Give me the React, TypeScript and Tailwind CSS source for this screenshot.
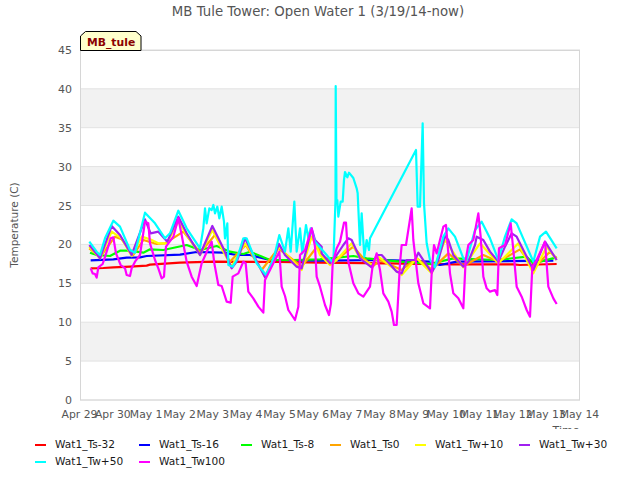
import React from 'react';

type Pt = [number, number];

// points read off the chart, given in two crops of it that are scaled 3x
const a = (pts: Pt[]): Pt[] => pts.map(([x, y]) => [80 + x / 3, 180 + y / 3]);
const b = (pts: Pt[]): Pt[] => pts.map(([x, y]) => [320 + x / 3, 180 + y / 3]);

const series: { name: string; color: string; points: Pt[] }[] = [
  {
    name: 'Wat1_Ts-32',
    color: '#ff0000',
    points: [
      ...a([[32, 265], [70, 264], [100, 262], [150, 260], [200, 257], [210, 254], [300, 248], [400, 245], [600, 246], [720, 248]]),
      ...b([[0, 248], [200, 250], [400, 253], [580, 253], [600, 255], [710, 252]]),
    ],
  },
  {
    name: 'Wat1_Ts-16',
    color: '#0000ff',
    points: [
      ...a([[32, 241], [100, 238], [140, 233], [180, 232], [200, 228], [300, 224], [350, 216], [430, 218], [470, 225], [510, 225], [570, 240], [720, 242]]),
      ...b([[0, 242], [200, 240], [330, 245], [360, 255], [410, 245], [700, 242]]),
    ],
  },
  {
    name: 'Wat1_Ts-8',
    color: '#00ff00',
    points: [
      ...a([[30, 218], [50, 225], [90, 228], [120, 212], [150, 212], [190, 218], [210, 208], [250, 210], [320, 195], [360, 210], [410, 198], [450, 215], [490, 222], [510, 215], [570, 240], [640, 240], [720, 238]]),
      ...b([[0, 238], [100, 228], [140, 235], [240, 245], [330, 252], [400, 235], [530, 240], [620, 230], [640, 250], [710, 232]]),
    ],
  },
  {
    name: 'Wat1_Ts0',
    color: '#ffa500',
    points: [
      ...a([[28, 205], [60, 232], [105, 170], [125, 178], [160, 225], [190, 180], [230, 192], [255, 190], [310, 155], [360, 218], [405, 165], [450, 245], [497, 195], [545, 270], [595, 205], [665, 260], [715, 195]]),
      ...b([[0, 220], [35, 250], [100, 200], [130, 235], [160, 258], [180, 240], [245, 270], [290, 235], [335, 268], [385, 220], [430, 258], [490, 225], [535, 245], [600, 208], [640, 265], [690, 215], [710, 235]]),
    ],
  },
  {
    name: 'Wat1_Tw+10',
    color: '#ffff00',
    points: [
      ...a([[28, 200], [60, 235], [95, 155], [125, 175], [155, 228], [185, 170], [210, 178], [235, 190], [260, 190], [295, 125], [320, 165], [360, 225], [397, 150], [430, 215], [455, 260], [495, 190], [520, 225], [555, 290], [597, 200], [630, 235], [665, 270], [695, 170], [710, 200]]),
      ...b([[0, 225], [30, 255], [50, 240], [95, 190], [120, 235], [155, 255], [175, 230], [245, 285], [290, 235], [335, 280], [375, 180], [430, 262], [480, 190], [535, 250], [595, 190], [640, 280], [680, 200], [710, 240]]),
    ],
  },
  {
    name: 'Wat1_Tw+30',
    color: '#a020f0',
    points: [
      ...a([[28, 195], [60, 235], [95, 138], [120, 165], [155, 225], [195, 118], [212, 160], [235, 155], [262, 185], [295, 110], [320, 160], [360, 225], [397, 138], [430, 205], [455, 265], [470, 245], [495, 175], [515, 215], [555, 292], [575, 250], [597, 192], [615, 225], [650, 260], [665, 265], [695, 145], [705, 180], [725, 200]]),
      ...b([[5, 220], [30, 250], [50, 225], [70, 195], [85, 175], [95, 180], [120, 235], [155, 262], [170, 225], [185, 225], [230, 275], [245, 280], [260, 240], [285, 240], [295, 218], [335, 278], [355, 240], [375, 168], [385, 180], [400, 225], [430, 260], [445, 245], [465, 195], [470, 170], [490, 180], [510, 215], [535, 245], [555, 200], [575, 160], [590, 170], [640, 270], [675, 185], [710, 240]]),
    ],
  },
  {
    name: 'Wat1_Tw+50',
    color: '#00ffff',
    points: [
      ...a([[28, 185], [50, 215], [60, 225], [75, 175], [100, 122], [120, 140], [150, 210], [165, 218], [195, 98], [225, 130], [255, 175], [270, 160], [295, 92], [320, 145], [360, 205], [370, 145], [375, 85], [380, 130], [388, 85], [395, 90], [400, 75], [405, 100], [412, 80], [418, 115], [425, 80], [432, 125], [435, 175], [442, 130], [445, 255], [458, 260], [470, 240], [490, 175], [500, 175], [530, 250], [558, 285], [575, 250], [585, 220], [598, 165], [608, 195], [615, 215], [625, 145], [632, 215], [643, 65], [650, 215], [660, 145], [667, 220], [678, 135], [685, 175], [692, 145], [705, 185], [740, 225], [760, 250]]),
      [335.5, 200],
      [335.7, 86],
      [336.5, 200],
      ...b([[52, 60], [55, 110], [62, 65], [68, 65], [72, 0], [75, -24], [82, -8], [87, -22], [100, -6], [110, 25], [113, 40], [120, 195], [125, 100], [133, 230], [140, 180], [147, 210], [150, 175]]),
      [416, 150],
      ...b([[293, 80], [300, 80], [308, -170], [312, 70], [320, 190], [330, 240], [345, 262], [370, 170], [385, 145], [405, 170], [430, 235], [440, 240], [465, 150], [485, 125], [510, 175], [535, 240], [555, 170], [575, 118], [590, 130], [640, 245], [660, 170], [678, 155], [710, 205]]),
    ],
  },
  {
    name: 'Wat1_Tw100',
    color: '#ff00ff',
    points: [
      ...a([[32, 265], [38, 280], [45, 282], [50, 293], [55, 262], [68, 252], [80, 215], [92, 175], [100, 172], [108, 220], [122, 255], [135, 265], [140, 285], [150, 288], [155, 265], [165, 245], [180, 225], [195, 125], [205, 130], [210, 190], [225, 240], [235, 265], [245, 295], [252, 290], [258, 200], [280, 170], [295, 115], [305, 165], [320, 245], [335, 290], [350, 318], [365, 250], [385, 205], [395, 185], [403, 250], [415, 315], [425, 318], [440, 365], [452, 368], [458, 290], [475, 280], [490, 245], [497, 250], [505, 335], [520, 355], [535, 380], [550, 398], [555, 300], [580, 250], [598, 215], [605, 320], [615, 348], [625, 390], [645, 420], [655, 380], [660, 225], [675, 210], [695, 145], [705, 200], [710, 290], [720, 320]]),
      ...b([[15, 375], [27, 405], [33, 370], [38, 250], [50, 205], [60, 185], [72, 128], [78, 128], [85, 245], [100, 310], [115, 340], [130, 350], [150, 320], [157, 265], [170, 220], [180, 270], [190, 340], [205, 365], [215, 395], [222, 435], [230, 435], [240, 250], [245, 195], [258, 195], [275, 85], [280, 180], [295, 310], [310, 370], [330, 385], [335, 280], [342, 195], [350, 220], [370, 140], [378, 135], [390, 280], [400, 340], [415, 355], [430, 385], [437, 240], [445, 195], [460, 180], [475, 100], [482, 170], [490, 290], [500, 325], [510, 335], [525, 330], [532, 345], [537, 205], [555, 195], [572, 130], [580, 210], [590, 320], [605, 350], [620, 390], [630, 410], [637, 260], [650, 240], [675, 185], [685, 320], [700, 355], [710, 372]]),
    ],
  },
];

const yTicks = [0, 5, 10, 15, 20, 25, 30, 35, 40, 45];
const grayBands = [35, 25, 15, 5];
const xLabels = ['Apr 29', 'Apr 30', 'May 1', 'May 2', 'May 3', 'May 4', 'May 5', 'May 6', 'May 7', 'May 8', 'May 9', 'May 10', 'May 11', 'May 12', 'May 13', 'May 14'];

const yPos = (v: number) => 400 - v * 7.78;

const Chart = () => (
  <svg width={640} height={409} viewBox="0 20 640 409" className="block">
    {grayBands.map((v) => (
      <rect key={v} x={81} y={yPos(v + 5)} width={499} height={38.9} className="fill-[#f2f2f2]" />
    ))}
    {yTicks.map((v) => (
      <line key={v} x1={80} x2={580} y1={yPos(v)} y2={yPos(v)} className="stroke-[#e2e2e2]" />
    ))}
    <rect x={80.5} y={50.5} width={499} height={349.5} fill="none" className="stroke-[#d6d6d6]" />
    {series.map((s) => (
      <polyline
        key={s.name}
        points={s.points.map((p) => p.join(',')).join(' ')}
        fill="none"
        stroke={s.color}
        strokeWidth={2.2}
        strokeLinejoin="round"
      />
    ))}
    {yTicks.map((v) => (
      <text key={v} x={72} y={yPos(v) + 4} textAnchor="end" className="fill-[#555555] text-[11px]">
        {v}
      </text>
    ))}
    {xLabels.map((label, i) => (
      <text key={label} x={79.5 + i * 33.33} y={418} textAnchor="middle" className="fill-[#555555] text-[10.8px]">
        {label}
      </text>
    ))}
    <text x={566} y={434} textAnchor="middle" className="fill-[#555555] text-[11px]">
      Time
    </text>
    <text
      x={0}
      y={0}
      transform="translate(18 225) rotate(-90)"
      textAnchor="middle"
      className="fill-[#555555] text-[10.5px]"
    >
      Temperature (C)
    </text>
    {/* station tag sitting on the top of the plot */}
    <polygon
      points="80.5,50.5 80.5,36 85.5,31.5 136,31.5 141,36 141,50.5"
      className="fill-[#ffffcc] stroke-black"
    />
    <text x={87} y={46} className="fill-[#8b0000] text-[10.8px] font-bold">
      MB_tule
    </text>
  </svg>
);

export default function App() {
  return (
    <div className="w-[640px] h-[480px] overflow-hidden bg-white font-['DejaVu_Sans',sans-serif]">
      <h1 className="h-5 pt-[3px] pr-[4px] text-center text-[13.3px] leading-[17px] font-normal text-[#555555]">
        MB Tule Tower: Open Water 1 (3/19/14-now)
      </h1>
      <Chart />
      <div className="grid grid-cols-[104px_102px_89px_85px_104px_auto] pl-[35px] pt-[7px] text-[10.6px] leading-[17px] text-[#1a1a1a]">
        {series.map((s) => (
          <div key={s.name} className="flex items-center gap-[9px]">
            <span className="h-[2px] w-[11px]" style={{ backgroundColor: s.color }} />
            <span>{s.name}</span>
          </div>
        ))}
      </div>
    </div>
  );
}
